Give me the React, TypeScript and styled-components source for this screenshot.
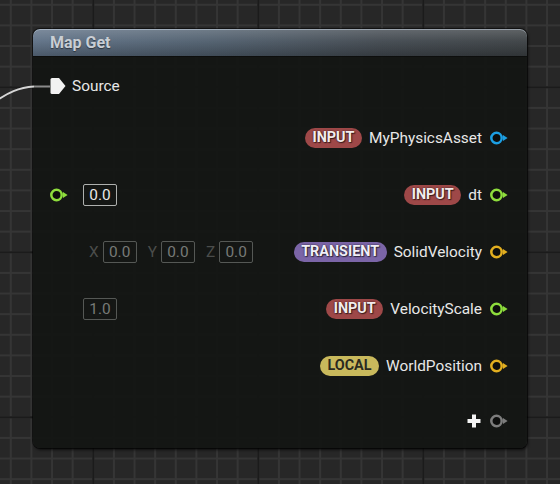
import React from 'react';
import styled, { createGlobalStyle } from 'styled-components';

const GlobalStyle = createGlobalStyle`
  html, body { margin: 0; padding: 0; background: #262626; overflow: hidden; }
  body { font-family: Roboto, "Noto Sans", "Liberation Sans", sans-serif; }
`;

const Canvas = styled.div`
  position: relative;
  width: 560px;
  height: 484px;
  overflow: hidden;
  box-sizing: border-box;
  padding: 29px 0 0 33px;
  background-color: #272727;
  background-image:
    linear-gradient(to right, #1b1b1b 2px, transparent 2px),
    linear-gradient(to bottom, #1b1b1b 2px, transparent 2px),
    linear-gradient(to right, #353535 2px, transparent 2px),
    linear-gradient(to bottom, #353535 2px, transparent 2px);
  background-size: 165px 165px, 165px 165px, 20.625px 20.625px, 20.625px 20.625px;
  background-position: 92.3px 86.3px, 92.3px 86.3px, 9.8px 3.8px, 9.8px 3.8px;
`;

const Wire = styled.svg`
  position: absolute;
  left: 0;
  top: 0;
  pointer-events: none;
  z-index: 2;
`;

const Node = styled.div`
  position: relative;
  z-index: 1;
  width: 494px;
  height: 419px;
  border-radius: 7px;
  background: rgba(19, 21, 19, 0.93);
  box-shadow: 0 0 0 1px rgba(0, 0, 0, 0.55), 1px 2px 3px rgba(0, 0, 0, 0.65);
  display: flex;
  flex-direction: column;
`;

const Header = styled.div`
  flex: none;
  height: 27px;
  display: flex;
  align-items: center;
  padding-left: 17px;
  border-radius: 7px 7px 0 0;
  background:
    linear-gradient(to bottom, rgba(255, 255, 255, 0.18), rgba(255, 255, 255, 0.03) 45%, rgba(0, 0, 0, 0.22)),
    linear-gradient(to right, #607287 0%, #51606f 35%, #434a51 70%, #3d4245 100%);
  box-shadow: inset 0 1px 0 rgba(210, 222, 235, 0.5), 0 1px 0 rgba(0, 0, 0, 0.35);
  color: #c9ced4;
  font-weight: 700;
  font-size: 16px;
  text-shadow: 0 1px 1px rgba(0, 0, 0, 0.45);
`;

const Body = styled.div`
  display: flex;
  flex-direction: column;
  padding: 7px 19px 0 17px;
`;

const Row = styled.div<{ $h?: number }>`
  height: ${(p) => p.$h ?? 57}px;
  display: flex;
  align-items: center;
  justify-content: space-between;
`;

const Side = styled.div`
  display: flex;
  align-items: center;
`;

const LeftSide = styled(Side)`
  gap: 15px;
`;

const Label = styled.span`
  color: #e8e8e8;
  font-size: 15.4px;
  line-height: 20px;
  white-space: nowrap;
`;

const SourceLabel = styled(Label)`
  margin-left: 6px;
`;

const PinName = styled(Label)`
  margin: 0 8px 0 7px;
`;

const Badge = styled.span<{ $bg: string; $fg: string; $dark?: boolean }>`
  height: 20px;
  line-height: 20px;
  padding: 0 7.5px;
  border-radius: 10px;
  background: ${(p) => p.$bg};
  color: ${(p) => p.$fg};
  font-size: 14.4px;
  font-weight: 700;
  white-space: nowrap;
  text-shadow: ${(p) =>
    p.$dark ? '0 0 1px rgba(255,255,230,0.25)' : '0 0 2px rgba(0,0,0,0.75), 1px 1px 1px rgba(0,0,0,0.55)'};
`;

const ValueBox = styled.div<{ $dim?: boolean }>`
  box-sizing: border-box;
  width: 34px;
  height: 22px;
  display: flex;
  align-items: center;
  justify-content: center;
  border: 1.5px solid ${(p) => (p.$dim ? '#555855' : '#aeb0ae')};
  border-radius: 2px;
  color: ${(p) => (p.$dim ? '#777a77' : '#e8e8e8')};
  font-size: 15.4px;
`;

const VectorGroup = styled.div`
  display: flex;
  align-items: center;
  gap: 11px;
  margin-left: 6px;
`;

const AxisField = styled.div`
  display: flex;
  align-items: center;
  gap: 4px;
`;

const AxisLabel = styled.span`
  color: #4b4d4b;
  font-size: 15.4px;
`;

const PinSpacer = styled.span`
  width: 18px;
  height: 14px;
  flex: none;
`;

const PinSvg = styled.svg`
  flex: none;
  display: block;
`;

const PlusSvg = styled.svg`
  flex: none;
  display: block;
  margin-right: 9px;
`;

const DataPin = ({ color }: { color: string }) => (
  <PinSvg width="18" height="14" viewBox="0 0 18 14">
    <circle cx="6.5" cy="7" r="5.2" fill="#0d0e0d" stroke={color} strokeWidth="2.5" />
    <path d="M13 4 L17.6 7 L13 10 Z" fill={color} />
  </PinSvg>
);

const ExecPin = () => (
  <PinSvg width="16" height="18" viewBox="0 0 16 18">
    <path d="M2 1 H9 L15.5 9 L9 17 H2 Q0.5 17 0.5 15.5 V2.5 Q0.5 1 2 1 Z" fill="#f2f2f2" />
  </PinSvg>
);

const Plus = () => (
  <PlusSvg width="14" height="14" viewBox="0 0 14 14">
    <path d="M5 0.5 H9 V5 H13.5 V9 H9 V13.5 H5 V9 H0.5 V5 H5 Z" fill="#f4f4f4" />
  </PlusSvg>
);

const COLORS = {
  blue: '#1c9ee2',
  green: '#8edd3c',
  yellow: '#e2ae1f',
  gray: '#7d7d7d',
};

const BADGES: Record<string, { bg: string; fg: string; dark?: boolean }> = {
  INPUT: { bg: '#9e4848', fg: '#f3ecec' },
  TRANSIENT: { bg: '#7b65a7', fg: '#f1eef7' },
  LOCAL: { bg: '#c9b95c', fg: '#2b2a1c', dark: true },
};

type OutRow = {
  badge: string;
  name: string;
  color: string;
  left?: React.ReactNode;
};

const rows: OutRow[] = [
  { badge: 'INPUT', name: 'MyPhysicsAsset', color: COLORS.blue },
  {
    badge: 'INPUT',
    name: 'dt',
    color: COLORS.green,
    left: (
      <>
        <DataPin color={COLORS.green} />
        <ValueBox>0.0</ValueBox>
      </>
    ),
  },
  {
    badge: 'TRANSIENT',
    name: 'SolidVelocity',
    color: COLORS.yellow,
    left: (
      <>
        <PinSpacer />
        <VectorGroup>
          {['X', 'Y', 'Z'].map((a) => (
            <AxisField key={a}>
              <AxisLabel>{a}</AxisLabel>
              <ValueBox $dim>0.0</ValueBox>
            </AxisField>
          ))}
        </VectorGroup>
      </>
    ),
  },
  {
    badge: 'INPUT',
    name: 'VelocityScale',
    color: COLORS.green,
    left: (
      <>
        <PinSpacer />
        <ValueBox $dim>1.0</ValueBox>
      </>
    ),
  },
  { badge: 'LOCAL', name: 'WorldPosition', color: COLORS.yellow },
];

export default function App() {
  return (
    <>
      <GlobalStyle />
      <Canvas>
        <Wire width="60" height="110" viewBox="0 0 60 110">
          <path d="M-4 101 C 8 93, 18 87.5, 34 86.5" fill="none" stroke="#d6d6d6" strokeWidth="2" />
          <path d="M34 86.5 L 50 86.5" fill="none" stroke="#8a8a8a" strokeWidth="2" />
        </Wire>
        <Node>
          <Header>Map Get</Header>
          <Body>
            <Row $h={46}>
              <Side>
                <ExecPin />
                <SourceLabel>Source</SourceLabel>
              </Side>
            </Row>
            {rows.map((r) => {
              const b = BADGES[r.badge];
              return (
                <Row key={r.name}>
                  <LeftSide>{r.left}</LeftSide>
                  <Side>
                    <Badge $bg={b.bg} $fg={b.fg} $dark={b.dark}>
                      {r.badge}
                    </Badge>
                    <PinName>{r.name}</PinName>
                    <DataPin color={r.color} />
                  </Side>
                </Row>
              );
            })}
            <Row $h={54}>
              <span />
              <Side>
                <Plus />
                <DataPin color={COLORS.gray} />
              </Side>
            </Row>
          </Body>
        </Node>
      </Canvas>
    </>
  );
}
